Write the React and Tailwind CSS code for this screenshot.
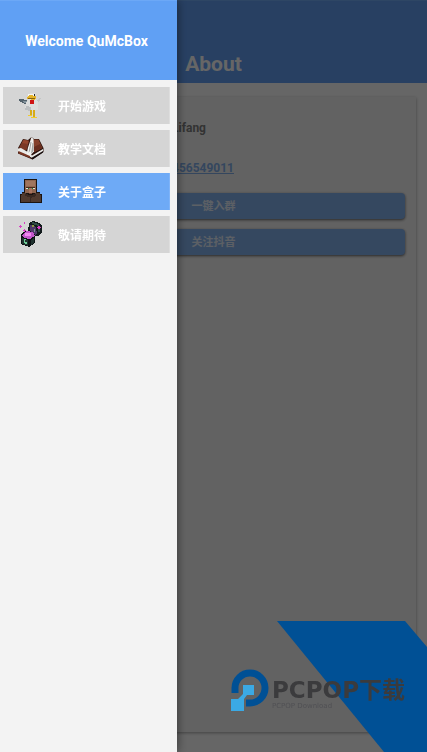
import { useState } from "react";
import { clsx } from "clsx";

const ChickenIcon = () => (
    <svg viewBox="0 0 27 27" className="size-[27px]" shapeRendering="crispEdges" aria-hidden="true">
        <path fill="#52616b" d="M2 7h4l4 1.500h2V12H8L5 10.500 2 9z" />
        <path fill="#84949d" d="M6 8.500l4 1v2L6 10z" />
        <path fill="#c3c6c7" d="M20 8l2-2h2l-1 3-3 2z" />
        <path fill="#dcdddd" d="M11 2l3-1h4l1 2v5l2 1v9l-7 1-6-1 1-8 2-1z" />
        <path fill="#bcbfc1" d="M9 14l5 1v4l-6-1z" />
        <path fill="#f4f4f2" d="M11 2h6v2h-6z" />
        <path fill="#e4b32a" d="M10 5l3-2 6 1v3l-2 1-7-1z" />
        <path fill="#8a6510" d="M11 6h7v1h-7z" />
        <path fill="#2a2a2a" d="M17 2h1v2h-1z" />
        <path fill="#cf1414" d="M13 8h4v4h-4z" />
        <path fill="#d7ab16" d="M13 18h2v6h-2zM16 18h2v7h-2z" />
        <path fill="#f0cc2c" d="M11 23h4v1h-4zM14 25h6v1h-6z" />
    </svg>
);

const BookIcon = () => (
    <svg viewBox="0 0 27 27" className="size-[27px]" aria-hidden="true">
        <path fill="#2b120c" d="M1 13L6 4l5 1 3.500-3L17 4h5l4.500 9v4L15.500 24.500 1 18.500z" />
        <path fill="#7b3825" d="M2 12.500L6.500 4.500l5.500 1-2 9-3 1z" />
        <path fill="#94452d" d="M6.500 5l5 1-.5 3-6-1z" />
        <path fill="#84402b" d="M16 4.500h5.500l4 8.500-8 4-1.500-3z" />
        <path fill="#672d1e" d="M17 12l6-3 2 4-8 4z" />
        <path fill="#e9e9e7" d="M1 13.500l3-.5 6 3.500 5 4 11-6.500v2.500L15.500 23 1 16.500z" />
        <path fill="#f2f2f0" d="M14.500 2l2 2 .5 12.500-4.500 5-3-2 1.500-7z" />
        <path fill="#a3a3a0" d="M13.500 7h1l-1.500 9-1.500 2zM15.500 8h1V16L14 19z" />
        <path fill="#7b3825" d="M1.500 16l11.500 5v2L1.500 18.500z" />
        <path fill="#191010" d="M15 22.500l11-6.500v1.500L15.500 24.500z" />
    </svg>
);

const VillagerIcon = () => (
    <svg viewBox="0 0 27 27" className="size-[27px]" shapeRendering="crispEdges" aria-hidden="true">
        <path fill="#1b1411" d="M7 1h13v13h3v2h2v9H3v-9h2v-2h2z" />
        <path fill="#8f6650" d="M8 2h11v13H8z" />
        <path fill="#a0765f" d="M9 3h9v5H9z" />
        <path fill="#4a2c20" d="M9 9h9v1H9z" />
        <path fill="#e2e2da" d="M9 10h2v1H9zM16 10h2v1h-2z" />
        <path fill="#188036" d="M11 10h1v1h-1zM15 10h1v1h-1z" />
        <path fill="#a87560" d="M12 10h3v6h-3z" />
        <path fill="#6d4030" d="M12 15h3v1h-3z" />
        <path fill="#503a2e" d="M4 17h1v-2h3l3 2h5l3-2h4v2h1v7H4z" />
        <path fill="#3a2921" d="M8 16h3v1h5v-1h3v2l-5 2-6-2zM13 20h1v4h-1z" />
    </svg>
);

const EnderChestIcon = () => (
    <svg viewBox="0 0 27 27" className="size-[27px]" shapeRendering="crispEdges" aria-hidden="true">
        <path fill="#121a1c" d="M12 2l4-2 7 2 2 3v7l-4 3h-4l-6-4z" />
        <path fill="#50386a" d="M13 4l6 2 1 7-3 1-4-4z" />
        <path fill="#2f4b45" d="M15 1l7 2v2l-7-2zM21 7h2v4h-2z" />
        <path fill="#8a9a42" d="M15 4h2v2h-2z" />
        <path fill="#7a9d90" d="M17 8h1v3h-1z" />
        <path fill="#0b1113" d="M4 13l5-3 9 3v9l-6 4-8-3z" />
        <path fill="#20322f" d="M5 17l6 2v6l-6-2zM14 19l3-2v4l-3 3z" />
        <path fill="#c457cc" d="M5 14l5-4 6 1 2 4-5 3-6-1z" />
        <path fill="#f08af0" d="M8 12h6v3H8z" />
        <path fill="#6fd09a" d="M7 18h2v1H8v2h2v2H8v-1H7z" />
        <path fill="#d93ec5" d="M3 4h1v1h1v1H4v1H3V6H2V5h1zM7 1h1v2H7zM6 9h1V8h1v1h1v1H8v1H7v-1H6zM20 6h1V5h2v1h1v1h-1v1h-2V7h-1z" />
    </svg>
);

const MENU = [
    ["play", "开始游戏", ChickenIcon],
    ["docs", "教学文档", BookIcon],
    ["about", "关于盒子", VillagerIcon],
    ["soon", "敬请期待", EnderChestIcon]
];

const Drawer = ({ active, onSelect }) => (
    <aside className="fixed inset-y-0 left-0 z-20 w-[177px] bg-[#f3f3f3] shadow-[0_0_10px_rgba(0,0,0,0.5)]">
        <h2 className="flex h-20 items-center justify-center border-t border-[#6ca8f6] bg-[#60a0f4] pr-1 text-sm font-bold text-white">
            Welcome QuMcBox
        </h2>
        <nav className="flex flex-col gap-1.5 py-[7px] pl-[3px] pr-[7px]">
            {MENU.map(([key, label, Icon]) => (
                <button
                    key={key}
                    type="button"
                    onClick={() => onSelect(key)}
                    className={clsx(
                        "flex h-[37px] items-center gap-3.5 border-r pl-3.5 text-xs font-bold text-white",
                        active === key
                            ? "border-[#80b4f8] bg-[#6eaaf6]"
                            : "border-[#dedede] bg-[#d5d5d5]"
                    )}
                >
                    <Icon />
                    <span className="pt-0.5">{label}</span>
                </button>
            ))}
        </nav>
    </aside>
);

const ActionButton = ({ children }) => (
    <button
        type="button"
        className="h-[26px] rounded-sm bg-[#86b4f0] pt-0.5 text-[11px] font-bold text-white/80 shadow-[0_1px_3px_rgba(0,0,0,0.6)]"
    >
        {children}
    </button>
);

const Watermark = () => (
    <div className="pointer-events-none fixed bottom-0 right-0 z-30 h-[131px] w-[200px]">
        <svg viewBox="0 0 200 131" className="size-full" aria-hidden="true">
            <path fill="#005095" d="M50 0h128l22 26v105h-43z" />
            <path
                fill="none"
                stroke="#005095"
                strokeWidth="7"
                d="M8 72V67a15 15 0 0 1 30 0a15 15 0 0 1-15 15H19"
            />
            <path fill="#3ba9e4" d="M16 64h11v10h-7l-3 4v12H4V78h7l5-5z" />
        </svg>
        <div className="absolute left-[45px] top-[57px] whitespace-nowrap font-['DejaVu_Sans','Noto_Sans_CJK_SC',sans-serif] text-[#3b3b3d]">
            <p className="text-[23px] font-bold leading-6">PCPOP下载</p>
            <p className="text-[7px] leading-2 text-[#505054]">PCPOP Download</p>
        </div>
    </div>
);

export default function App() {
    const [active, setActive] = useState("about");

    return (
        <div className="flex min-h-screen flex-col bg-white font-[Roboto,'Noto_Sans_CJK_SC',sans-serif]">
            <header className="flex h-[83px] items-end justify-center border-t border-[#73aff9] bg-[#64a0f6] pb-[5px]">
                <h1 className="text-[21px] font-bold leading-7 text-white">About</h1>
            </header>

            <main className="flex grow flex-col px-[11px] pb-5 pt-3.5">
                <section className="flex grow flex-col bg-[#f6f6f6] px-[11px] pt-[21px] shadow-[0_1px_3px_rgba(0,0,0,0.35)]">
                    <div className="flex flex-col items-start gap-5 pl-[150px] text-xs font-bold text-[#808080]">
                        <p className="leading-5">Lifang</p>
                        <a href="#group" className="leading-5 text-[#82b0ec] underline">
                            456549011
                        </a>
                    </div>
                    <div className="mt-[15px] flex flex-col gap-2.5">
                        <ActionButton>一键入群</ActionButton>
                        <ActionButton>关注抖音</ActionButton>
                    </div>
                </section>
            </main>

            <div className="fixed inset-0 z-10 bg-black/60" />
            <Drawer active={active} onSelect={setActive} />
            <Watermark />
        </div>
    );
}
